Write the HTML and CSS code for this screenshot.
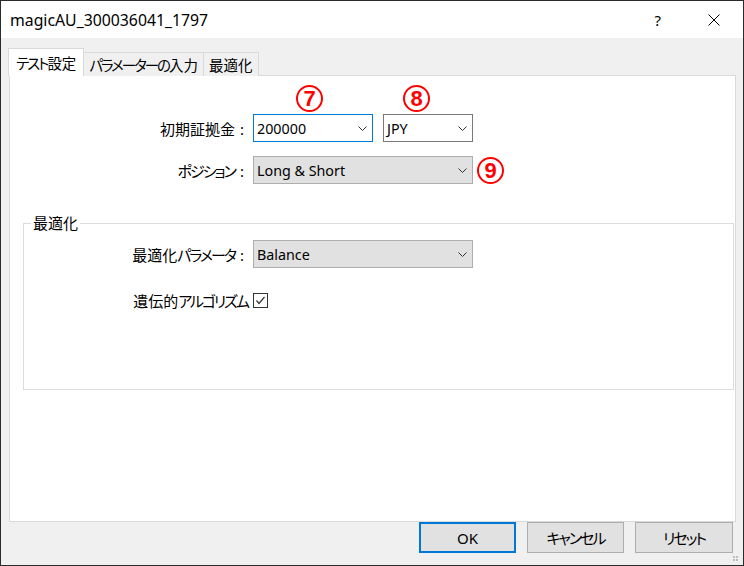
FILE: index.html
```html
<!DOCTYPE html>
<html lang="ja">
<head>
<meta charset="utf-8">
<title>magicAU_300036041_1797</title>
<link rel="stylesheet" href="styles.css">
</head>
<body>
<div class="window">
  <div class="titlebar">
    <div class="title">magicAU_300036041_1797</div>
    <div class="title-controls">
      <span class="help">?</span>
      <svg class="close" width="12" height="12" viewBox="0 0 12 12"><path d="M0.5 0.5 L11.5 11.5 M11.5 0.5 L0.5 11.5" stroke="#000" stroke-width="1" fill="none"/></svg>
    </div>
  </div>

  <div class="tabs">
    <div class="tab active"><span class="k">テスト</span>設定</div>
    <div class="tab"><span class="k">パラメーターの</span>入力</div>
    <div class="tab">最適化</div>
  </div>

  <div class="panel">
    <span class="marker m7">7</span>
    <span class="marker m8">8</span>

    <div class="form">
      <div class="row">
        <label class="label">初期証拠金<span class="colon">:</span></label>
        <div class="combo focus w-deposit"><span class="value">200000</span><svg class="chev" width="9" height="5" viewBox="0 0 9 5"><polyline points="0.5,0.5 4.5,4.5 8.5,0.5" fill="none" stroke="#333" stroke-width="1"/></svg></div>
        <div class="combo plain w-cur"><span class="value">JPY</span><svg class="chev" width="9" height="5" viewBox="0 0 9 5"><polyline points="0.5,0.5 4.5,4.5 8.5,0.5" fill="none" stroke="#333" stroke-width="1"/></svg></div>
      </div>
      <div class="row">
        <label class="label"><span class="k">ポジション</span><span class="colon">:</span></label>
        <div class="combo gray w-wide"><span class="value">Long &amp; Short</span><svg class="chev" width="9" height="5" viewBox="0 0 9 5"><polyline points="0.5,0.5 4.5,4.5 8.5,0.5" fill="none" stroke="#333" stroke-width="1"/></svg></div>
        <span class="marker inline">9</span>
      </div>
    </div>

    <fieldset class="group">
      <legend>最適化</legend>
      <div class="row first">
        <label class="label glabel">最適化<span class="k">パラメータ</span><span class="colon">:</span></label>
        <div class="combo gray w-wide"><span class="value">Balance</span><svg class="chev" width="9" height="5" viewBox="0 0 9 5"><polyline points="0.5,0.5 4.5,4.5 8.5,0.5" fill="none" stroke="#333" stroke-width="1"/></svg></div>
      </div>
      <div class="row check-row">
        <label class="label clabel">遺伝的<span class="k">アルゴリズム</span></label>
        <span class="checkbox"><svg width="13" height="13" viewBox="0 0 13 13"><polyline points="2.5,6.5 5,9.5 10.5,3" fill="none" stroke="#333" stroke-width="1.2"/></svg></span>
      </div>
    </fieldset>
  </div>

  <div class="buttons">
    <button class="btn default">OK</button>
    <button class="btn"><span class="k">キャンセル</span></button>
    <button class="btn wide"><span class="k">リセット</span></button>
  </div>

  <svg class="grip" width="6" height="6" viewBox="0 0 6 6"><rect x="0" y="0" width="2" height="2" fill="#bdbdbd"/><rect x="3" y="0" width="2" height="2" fill="#bdbdbd"/><rect x="0" y="3" width="2" height="2" fill="#bdbdbd"/><rect x="3" y="3" width="2" height="2" fill="#bdbdbd"/></svg>
</div>
</body>
</html>
```

FILE: styles.css
```css
html, body {
  margin: 0;
  padding: 0;
  background: #f0f0f0;
}

.window {
  position: relative;
  width: 744px;
  height: 566px;
  box-sizing: border-box;
  border: 1px solid #2b2b2b;
  background: #f0f0f0;
  display: flex;
  flex-direction: column;
  font-family: "Noto Sans", "Noto Sans CJK JP", sans-serif;
  font-size: 15px;
  color: #000;
  font-feature-settings: "palt" 1;
}

.k {
  letter-spacing: -2px;
}

.titlebar {
  height: 37px;
  background: #fff;
  display: flex;
  align-items: center;
  justify-content: space-between;
  flex: none;
}

.title {
  padding-left: 9px;
  font-size: 15.8px;
}

.title-controls {
  display: flex;
  align-items: center;
  gap: 47px;
  padding-right: 23px;
}

.help {
  font-size: 15px;
}

.close {
  display: block;
}

.tabs {
  display: flex;
  align-items: flex-end;
  margin: 10px 0 -1px 7px;
  height: 28px;
  flex: none;
  position: relative;
  z-index: 1;
}

.tab {
  height: 24px;
  box-sizing: border-box;
  border: 1px solid #d9d9d9;
  border-bottom: none;
  border-left: none;
  padding: 0 5px;
  display: flex;
  align-items: center;
  background: #f0f0f0;
  font-size: 14.5px;
  white-space: nowrap;
}

.tab.active {
  height: 28px;
  border-left: 1px solid #d9d9d9;
  background: #fff;
  padding: 0 7px;
}

.panel {
  position: relative;
  margin: 0 7px 0 8px;
  height: 447px;
  box-sizing: border-box;
  border: 1px solid #d9d9d9;
  background: #fff;
  flex: none;
}

.form {
  padding-top: 38px;
  display: flex;
  flex-direction: column;
  gap: 14px;
}

.row {
  display: flex;
  align-items: center;
}

.label {
  width: 243px;
  text-align: right;
  padding-right: 9px;
  box-sizing: border-box;
  flex: none;
  white-space: nowrap;
}

.colon {
  margin-left: 5px;
}

.combo {
  height: 28px;
  box-sizing: border-box;
  border: 1px solid #7a7a7a;
  display: flex;
  align-items: center;
  justify-content: space-between;
  padding: 0 5px 0 3px;
  flex: none;
  font-size: 14.3px;
}

.combo .value {
  white-space: nowrap;
}

.combo.focus {
  border-color: #0078d7;
  background: #fff;
}

.combo.plain {
  background: #fff;
}

.combo.gray {
  background: #e1e1e1;
  border-color: #adadad;
}

.w-deposit { width: 120px; }
.w-cur { width: 90px; margin-left: 10px; }
.w-wide { width: 220px; }

.chev {
  display: block;
  flex: none;
}

.marker {
  width: 27px;
  height: 27px;
  box-sizing: border-box;
  border: 2px solid #ff0000;
  border-radius: 50%;
  color: #ff0000;
  font-family: "Liberation Sans", sans-serif;
  font-weight: bold;
  font-size: 22px;
  line-height: 23px;
  text-align: center;
  display: inline-block;
}

.m7 { position: absolute; left: 286px; top: 9px; }
.m8 { position: absolute; left: 393px; top: 9px; }
.marker.inline { margin-left: 4px; }

.group {
  margin: 29px 1px 0 13px;
  padding: 0;
  border: 1px solid #dcdcdc;
  height: 177px;
  box-sizing: border-box;
  min-width: 0;
}

.group legend {
  margin-left: 7px;
  padding: 0 2px;
  line-height: 20px;
  font-size: 15px;
}

.group .row.first {
  margin-top: 7px;
}

.glabel {
  width: 229px;
}

.check-row {
  margin-top: 22px;
}

.clabel {
  width: 229px;
  padding-right: 5px;
}

.checkbox {
  width: 15px;
  height: 15px;
  box-sizing: border-box;
  border: 1px solid #333;
  background: #fff;
  display: flex;
  align-items: center;
  justify-content: center;
}

.checkbox svg {
  display: block;
}

.buttons {
  display: flex;
  justify-content: flex-end;
  gap: 11px;
  padding-right: 10px;
  flex: none;
}

.btn {
  width: 97px;
  height: 31px;
  box-sizing: border-box;
  border: 1px solid #adadad;
  background: #e1e1e1;
  font-family: "Noto Sans", "Noto Sans CJK JP", sans-serif;
  font-feature-settings: "palt" 1;
  font-size: 15px;
  color: #000;
  padding: 0;
  margin: 0;
}

.btn.default {
  border: 2px solid #0078d7;
}

.btn.wide {
  width: 98px;
}

.grip {
  position: absolute;
  right: 4px;
  bottom: 3px;
}
```
